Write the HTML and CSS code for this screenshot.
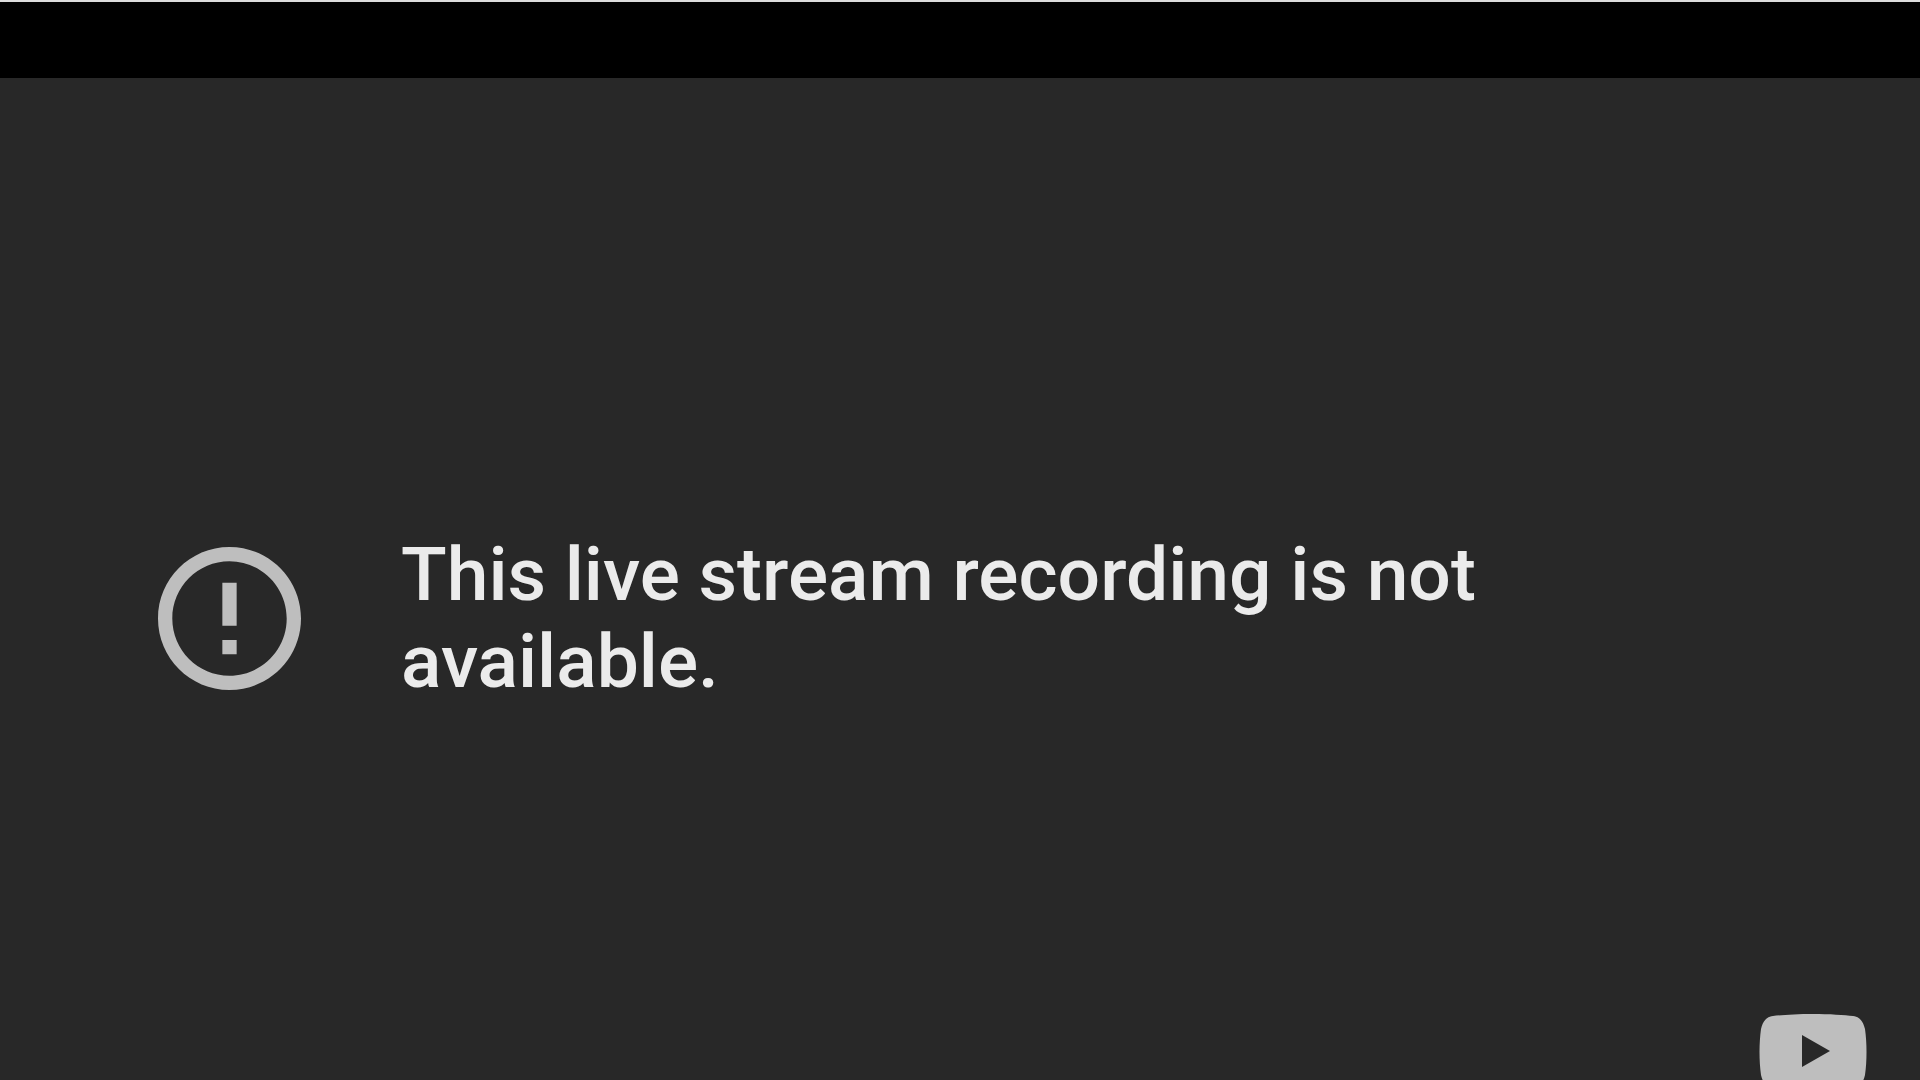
FILE: index.html
```html
<!DOCTYPE html>
<html lang="en">
<head>
  <meta charset="UTF-8" />
  <meta name="viewport" content="width=device-width, initial-scale=1.0"/>
  <title>Video unavailable</title>
  <link rel="stylesheet" href="styles.css">
</head>
<body>

  <header class="top-bar"></header>

  <main class="player">
    <div class="error">
      <svg class="error-icon" viewBox="2 2 20 20" aria-hidden="true">
        <path d="M11 15h2v2h-2zm0-8h2v6h-2zm1-5C6.480 2 2 6.480 2 12s4.480 10 10 10 10-4.480 10-10S17.520 2 12 2zm0 18c-4.420 0-8-3.580-8-8s3.580-8 8-8 8 3.580 8 8-3.580 8-8 8z"/>
      </svg>
      <h1 class="error-text">This live stream recording is not available.</h1>
    </div>

    <a class="logo" href="#" aria-label="Watch on YouTube">
      <svg class="logo-icon" viewBox="0 0 108 76" aria-hidden="true">
        <path fill-rule="evenodd" d="M54 0C38 0 22 1 14 2C7 3 4 7 2 15C0 29 0 47 2 61C4 69 7 73 14 74C22 75 38 76 54 76C70 76 86 75 94 74C101 73 104 69 106 61C108 47 108 29 106 15C104 7 101 3 94 2C86 1 70 0 54 0zM43 21L71 37L43 53z"/>
      </svg>
    </a>
  </main>

</body>
</html>
```

FILE: styles.css
```css
* {
  box-sizing: border-box;
}

body {
  margin: 0;
  height: 100vh;
  display: flex;
  flex-direction: column;
  overflow: hidden;
  background-color: #282828;
  font-family: Roboto, sans-serif;
}

.top-bar {
  height: 78px;
  flex-shrink: 0;
  background-color: #000;
  border-top: 2px solid #ddd;
}

.player {
  flex: 1;
  display: flex;
  flex-direction: column;
  justify-content: space-between;
  padding-top: 453px;
}

.error {
  display: flex;
  align-items: center;
  gap: 100px;
  padding: 0 400px 0 158px;
}

.error-icon {
  width: 143px;
  height: 143px;
  flex-shrink: 0;
  fill: #bebebe;
}

.error-text {
  margin: 0;
  color: #ebebeb;
  font-size: 75px;
  line-height: 87px;
  font-weight: 500;
}

.logo {
  align-self: flex-end;
  height: 66px;
  margin-right: 53px;
}

.logo-icon {
  display: block;
  width: 108px;
  height: 76px;
  fill: #bebebe;
}
```
